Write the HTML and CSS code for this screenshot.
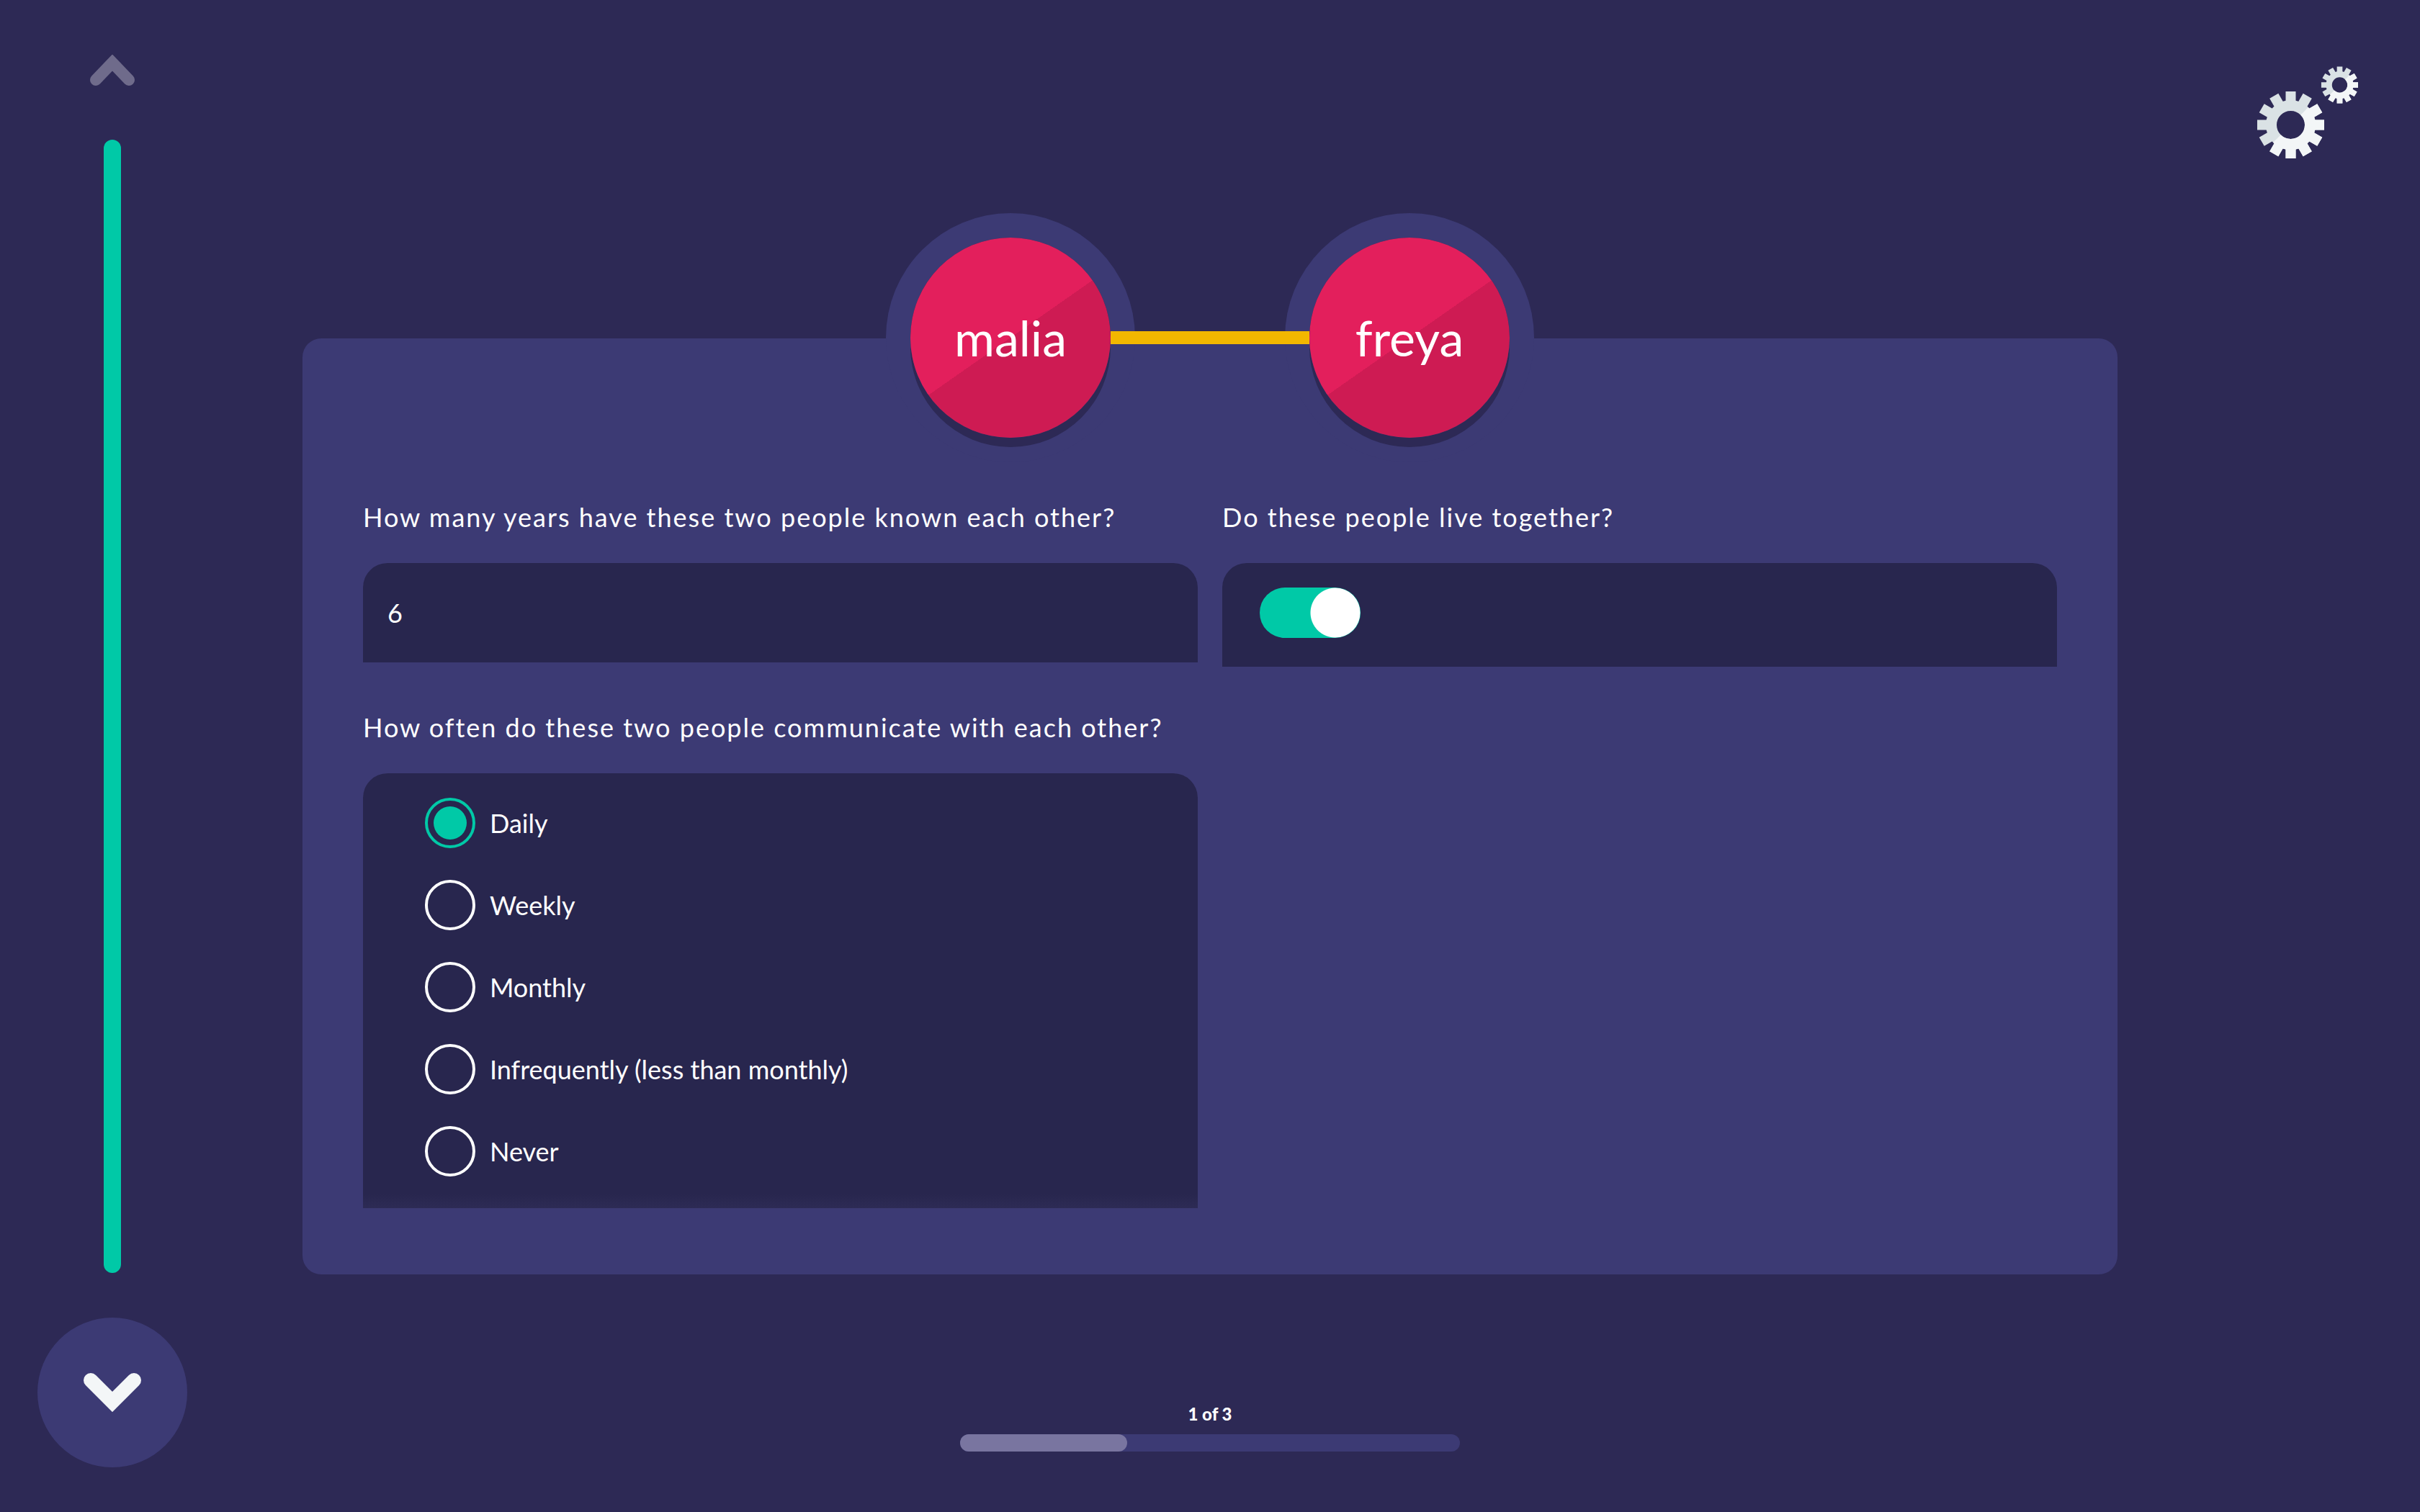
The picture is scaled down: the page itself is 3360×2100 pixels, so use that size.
FILE: index.html
```html
<!DOCTYPE html>
<html lang="en">
<head>
<meta charset="utf-8">
<meta name="viewport" content="width=device-width, initial-scale=1">
<title>Interview</title>
<link rel="stylesheet" href="styles.css">
</head>
<body class="interview">
  <nav class="timeline" aria-label="Interview navigation">
    <button class="timeline-back" type="button" aria-label="Back">
      <svg width="64" height="44" viewBox="0 0 64 44" fill="none" stroke="currentColor" stroke-width="16" stroke-linecap="round"><path d="M9 35 32 11 55 35"/></svg>
    </button>
    <div class="timeline-bar" role="progressbar" aria-label="Interview progress" aria-valuenow="100"></div>
    <button class="timeline-next" type="button" aria-label="Next">
      <svg width="80" height="54" viewBox="0 0 80 54" fill="none" stroke="currentColor" stroke-width="20" stroke-linecap="round"><path d="M10 10 40 40 70 10"/></svg>
    </button>
  </nav>

  <main class="stage">
    <div class="pair">
      <div class="node">malia</div>
      <div class="edge"></div>
      <div class="node">freya</div>
    </div>

    <form class="panel">
      <div class="field">
        <label class="question" for="years">How many years have these two people known each other?</label>
        <input class="text-input" id="years" type="text" value="6">
      </div>

      <div class="field">
        <label class="question" for="together">Do these people live together?</label>
        <div class="toggle-box">
          <input class="toggle" id="together" type="checkbox" checked>
        </div>
      </div>

      <div class="field" role="radiogroup" aria-labelledby="often">
        <div class="question" id="often">How often do these two people communicate with each other?</div>
        <div class="options">
          <label class="option"><input class="radio" type="radio" name="often" checked>Daily</label>
          <label class="option"><input class="radio" type="radio" name="often">Weekly</label>
          <label class="option"><input class="radio" type="radio" name="often">Monthly</label>
          <label class="option"><input class="radio" type="radio" name="often">Infrequently (less than monthly)</label>
          <label class="option"><input class="radio" type="radio" name="often">Never</label>
        </div>
      </div>
    </form>

    <footer class="steps">
      <span class="steps-label">1 of 3</span>
      <div class="steps-track"><div class="steps-fill" style="width: 33.4%"></div></div>
    </footer>
  </main>

  <aside class="tools">
    <button class="settings" type="button" aria-label="Settings">
      <svg width="140" height="128" viewBox="0 0 140 128">
        <defs>
          <clipPath id="lower-half"><path d="M-50 50 50-50V50Z"/></clipPath>
          <g id="gear-shape">
            <circle r="27" fill="none" stroke="currentColor" stroke-width="15"/>
            <g id="teeth" fill="currentColor">
              <path id="tooth" d="M-7-46.500H7V-33L9-29H-9L-7-33Z"/>
              <use href="#tooth" transform="rotate(30)"/>
              <use href="#tooth" transform="rotate(60)"/>
              <use href="#tooth" transform="rotate(90)"/>
              <use href="#tooth" transform="rotate(120)"/>
              <use href="#tooth" transform="rotate(150)"/>
              <use href="#tooth" transform="rotate(180)"/>
              <use href="#tooth" transform="rotate(210)"/>
              <use href="#tooth" transform="rotate(240)"/>
              <use href="#tooth" transform="rotate(270)"/>
              <use href="#tooth" transform="rotate(300)"/>
              <use href="#tooth" transform="rotate(330)"/>
            </g>
          </g>
          <g id="gear">
            <use href="#gear-shape" color="#dae2e5"/>
            <g clip-path="url(#lower-half)"><use href="#gear-shape" color="#f3f6f7"/></g>
          </g>
        </defs>
        <use href="#gear" transform="translate(46.500 81.500)"/>
        <use href="#gear" transform="translate(114.500 26) scale(.55)"/>
      </svg>
    </button>
  </aside>
</body>
</html>
```

FILE: styles.css
```css
:root {
  --background: #2d2955;
  --panel: #3c3a74;
  --field: #28264e;
  --accent: #00c9a7;
  --light: #f3f6f7;
}

* {
  box-sizing: border-box;
}

.interview {
  margin: 0;
  min-height: 100vh;
  display: grid;
  grid-template-columns: 1fr 75% 1fr;
  background: var(--background);
  color: #fff;
  font-family: Lato, "Open Sans", sans-serif;
  font-size: 36px;
  line-height: 44px;
}

button {
  display: flex;
  align-items: center;
  justify-content: center;
  padding: 0;
  border: 0;
  background: none;
  cursor: pointer;
}

/* Left-hand navigation */
.timeline {
  display: flex;
  flex-direction: column;
  align-items: center;
  width: 312px;
  padding: 76px 52px 62px;
}

.timeline-back {
  color: #6f6b8b;
}

.timeline-bar {
  flex: 1;
  width: 24px;
  margin: 74px 0 62px;
  border-radius: 12px;
  background: var(--accent);
}

.timeline-next {
  width: 208px;
  height: 208px;
  border-radius: 50%;
  background: var(--panel);
  color: var(--light);
}

/* The two people in question */
.stage {
  display: flex;
  flex-direction: column;
  padding: 330px 0 84px;
}

.pair {
  display: flex;
  align-items: center;
  justify-content: center;
  z-index: 1;
  margin-bottom: -138px;
}

.node {
  display: flex;
  align-items: center;
  justify-content: center;
  width: 278px;
  height: 278px;
  border-radius: 50%;
  background: linear-gradient(145deg, #e31f5c 50%, #ce1b53 50%);
  box-shadow: 0 13px 0 var(--background), 0 0 0 34px var(--panel);
  font-size: 68px;
  line-height: 80px;
}

.edge {
  width: 276px;
  height: 18px;
  z-index: 1;
  background: #f2b700;
}

/* Questions */
.panel {
  display: grid;
  grid-template-columns: 1fr 1fr;
  align-items: start;
  gap: 62px 34px;
  padding: 226px 84px 92px;
  border-radius: 26px;
  background: var(--panel);
}

.field {
  display: flex;
  flex-direction: column;
  gap: 42px;
}

.question {
  letter-spacing: 2px;
}

.text-input,
.toggle-box,
.options {
  border: 0;
  border-radius: 34px 34px 0 0;
  background: var(--field);
}

.text-input {
  width: 100%;
  height: 138px;
  padding: 0 34px;
  color: inherit;
  font: inherit;
}

.toggle-box {
  display: flex;
  padding: 34px 52px 40px;
}

.toggle {
  appearance: none;
  width: 140px;
  height: 70px;
  margin: 0;
  border-radius: 35px;
  background: radial-gradient(circle at 105px 35px, #fff 34px, var(--accent) 35px);
}

.options {
  display: flex;
  flex-direction: column;
  gap: 44px;
  padding: 34px 86px 44px;
  background: linear-gradient(to top, #2d2b55, var(--field) 20px);
}

.option {
  display: flex;
  align-items: center;
  gap: 20px;
}

.radio {
  appearance: none;
  width: 70px;
  height: 70px;
  margin: 0;
  border: 4px solid #fff;
  border-radius: 50%;
}

.radio:checked {
  padding: 8px;
  border-color: var(--accent);
  background: var(--accent) content-box;
}

/* Progress through the pairs */
.steps {
  display: flex;
  flex-direction: column;
  align-items: center;
  gap: 12px;
  margin-top: auto;
}

.steps-label {
  font-size: 24px;
  font-weight: 900;
  line-height: 32px;
}

.steps-track {
  width: 694px;
  border-radius: 12px;
  background: var(--panel);
}

.steps-fill {
  height: 24px;
  border-radius: 12px;
  background: #7975a0;
}

/* Top right */
.tools {
  display: flex;
  justify-content: flex-end;
  align-items: flex-start;
  padding: 92px 86px;
}
```
